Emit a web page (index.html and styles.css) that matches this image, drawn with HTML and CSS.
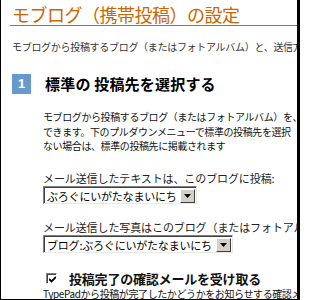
FILE: index.html
```html
<!DOCTYPE html>
<html lang="ja">
<head>
<meta charset="utf-8">
<link rel="stylesheet" href="styles.css">
</head>
<body>
<div class="frame">
  <h1 class="title">モブログ（携帯投稿）の設定</h1>
  <p class="intro">モブログから投稿するブログ（またはフォトアルバム）と、送信方法を設定します。</p>

  <div class="step">
    <span class="step-num">1</span>
    <h2 class="step-title">標準の 投稿先を選択する</h2>
  </div>

  <div class="step-body">
    <p class="desc">モブログから投稿するブログ（またはフォトアルバム）を、<br>できます。下のプルダウンメニューで標準の投稿先を選択<br>ない場合は、標準の投稿先に掲載されます</p>

    <div class="label first">メール送信したテキストは、このブログに投稿:</div>
    <div class="select s1">
      <span class="select-text">ぶろぐにいがたなまいにち</span>
      <span class="select-btn"><svg width="7" height="4" viewBox="0 0 7 4"><path d="M0 0H7L3.5 4Z" fill="#000"/></svg></span>
    </div>

    <div class="label">メール送信した写真はこのブログ（またはフォトアルバム）に投稿:</div>
    <div class="select s2">
      <span class="select-text">ブログ:ぶろぐにいがたなまいにち</span>
      <span class="select-btn"><svg width="7" height="4" viewBox="0 0 7 4"><path d="M0 0H7L3.5 4Z" fill="#000"/></svg></span>
    </div>

    <div class="check-row">
      <span class="checkbox"><svg width="7" height="7" viewBox="0 0 7 7"><path d="M0 3L2.5 5.5L7 1" stroke="#000" stroke-width="1.8" fill="none"/></svg></span>
      <span class="check-label">投稿完了の確認メールを受け取る</span>
    </div>
    <p class="note">TypePadから投稿が完了したかどうかをお知らせする確認メールを受け取ります。</p>
  </div>
</div>
</body>
</html>
```
FILE: styles.css
```css
html, body {
  margin: 0;
  padding: 0;
  background: #fff;
}
.frame {
  width: 300px;
  height: 300px;
  box-sizing: border-box;
  border-left: 1px solid #000;
  border-right: 3px solid #000;
  border-bottom: 1px solid #000;
  overflow: hidden;
  padding-left: 11px;
  font-family: "Noto Sans CJK JP", "Noto Sans", sans-serif;
  white-space: nowrap;
}
.title {
  margin: 0 0 0 -2px;
  padding: 3px 0 0 2px;
  font-size: 18px;
  line-height: 22px;
  font-weight: normal;
  color: #cc6600;
  border-bottom: 1px solid #cc6600;
  letter-spacing: -0.5px;
}
.intro {
  margin: 14px 0 0;
  font-size: 10px;
  line-height: 14px;
  color: #333;
  letter-spacing: -0.3px;
}
.step {
  display: flex;
  align-items: center;
  gap: 14px;
  margin-top: 20px;
  height: 20px;
}
.step-num {
  width: 19px;
  height: 20px;
  background: #6699cc;
  color: #fff;
  font-family: "Liberation Sans", Arial, sans-serif;
  font-weight: bold;
  font-size: 13px;
  line-height: 20px;
  text-align: center;
  flex: none;
}
.step-title {
  margin: 0;
  font-size: 15px;
  line-height: 20px;
  font-weight: bold;
  color: #000;
  letter-spacing: 0.2px;
}
.step-body {
  padding-left: 31px;
}
.desc {
  margin: 16px 0 0;
  font-size: 10px;
  line-height: 14.5px;
  color: #111;
  letter-spacing: -0.4px;
}
.label {
  margin-top: 16px;
  font-size: 11px;
  line-height: 14px;
  color: #222;
  letter-spacing: -0.1px;
}
.label.first {
  margin-top: 17.5px;
}
.select {
  display: flex;
  align-items: center;
  justify-content: space-between;
  height: 18px;
  box-sizing: border-box;
  border: 1px solid;
  border-color: #808080 #e8e8e8 #e8e8e8 #808080;
  box-shadow: inset 1px 1px 0 #404040;
  background: #fff;
  padding: 1px 1px 0 3px;
  margin-top: 1px;
}
.select.s1 { width: 154px; }
.select.s2 { width: 190px; }
.select-text {
  font-size: 11px;
  line-height: 14px;
  color: #000;
  letter-spacing: -0.2px;
}
.select-btn {
  width: 15px;
  height: 14px;
  box-sizing: border-box;
  background: #d4d0c8;
  border: 1px solid;
  border-color: #fff #404040 #404040 #fff;
  display: flex;
  align-items: center;
  justify-content: center;
}
.check-row {
  display: flex;
  align-items: center;
  gap: 12px;
  margin-top: 17px;
  height: 17px;
  padding-left: 3px;
}
.checkbox {
  width: 11px;
  height: 11px;
  box-sizing: border-box;
  border: 1px solid;
  border-color: #808080 #fff #fff #808080;
  box-shadow: inset 1px 1px 0 #404040;
  background: #fff;
  display: flex;
  align-items: center;
  justify-content: center;
  padding: 1px 0 0 1px;
  flex: none;
}
.check-label {
  font-size: 13px;
  line-height: 17px;
  font-weight: bold;
  color: #111;
  letter-spacing: -0.2px;
}
.note {
  margin: 1px 0 0;
  font-size: 10px;
  line-height: 12px;
  color: #111;
  letter-spacing: -0.4px;
}
```
